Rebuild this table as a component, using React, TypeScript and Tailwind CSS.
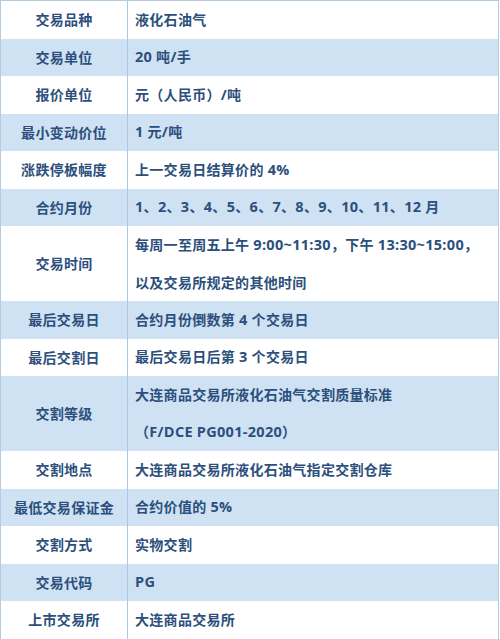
import React from "react";

const rows: { k: string; v: string[] }[] = [
  { k: "交易品种", v: ["液化石油气"] },
  { k: "交易单位", v: ["20 吨/手"] },
  { k: "报价单位", v: ["元（人民币）/吨"] },
  { k: "最小变动价位", v: ["1 元/吨"] },
  { k: "涨跌停板幅度", v: ["上一交易日结算价的 4%"] },
  { k: "合约月份", v: ["1、2、3、4、5、6、7、8、9、10、11、12 月"] },
  { k: "交易时间", v: ["每周一至周五上午 9:00~11:30，下午 13:30~15:00，", "以及交易所规定的其他时间"] },
  { k: "最后交易日", v: ["合约月份倒数第 4 个交易日"] },
  { k: "最后交割日", v: ["最后交易日后第 3 个交易日"] },
  { k: "交割等级", v: ["大连商品交易所液化石油气交割质量标准", "（F/DCE PG001-2020）"] },
  { k: "交割地点", v: ["大连商品交易所液化石油气指定交割仓库"] },
  { k: "最低交易保证金", v: ["合约价值的 5%"] },
  { k: "交割方式", v: ["实物交割"] },
  { k: "交易代码", v: ["PG"] },
  { k: "上市交易所", v: ["大连商品交易所"] },
];

function Mixed({ text }: { text: string }) {
  const parts = text.split(/([\x21-\x7E]+)/);
  return (
    <span className="whitespace-pre">
      {parts.map((p, i) =>
        /^[\x21-\x7E]+$/.test(p) ? (
          <span key={i} className="text-[14.5px]">
            {p}
          </span>
        ) : (
          <React.Fragment key={i}>{p}</React.Fragment>
        )
      )}
    </span>
  );
}

export default function App() {
  return (
    <div
      className="w-[500px] h-[639px] bg-white"
      style={{ fontFamily: '"Open Sans", "Noto Sans CJK SC", sans-serif' }}
    >
      <div className="w-[499px] border border-[#b4cbe0] flex flex-col text-[14px] tracking-[0.3px] font-bold text-[#2c4f7c]">
        {rows.map((r, i) => (
          <div
            key={i}
            className={`flex ${i % 2 === 1 ? "bg-[#cfe2f3]" : "bg-white"}`}
          >
            <div className="w-[127px] shrink-0 flex items-center justify-center border-r border-[#a9c8e5]">
              {r.k}
            </div>
            <div className="flex-1 flex flex-col pl-[7px]">
              {r.v.map((line, j) => (
                <div key={j} className="h-[37.5px] flex items-center">
                  <Mixed text={line} />
                </div>
              ))}
            </div>
          </div>
        ))}
      </div>
    </div>
  );
}
